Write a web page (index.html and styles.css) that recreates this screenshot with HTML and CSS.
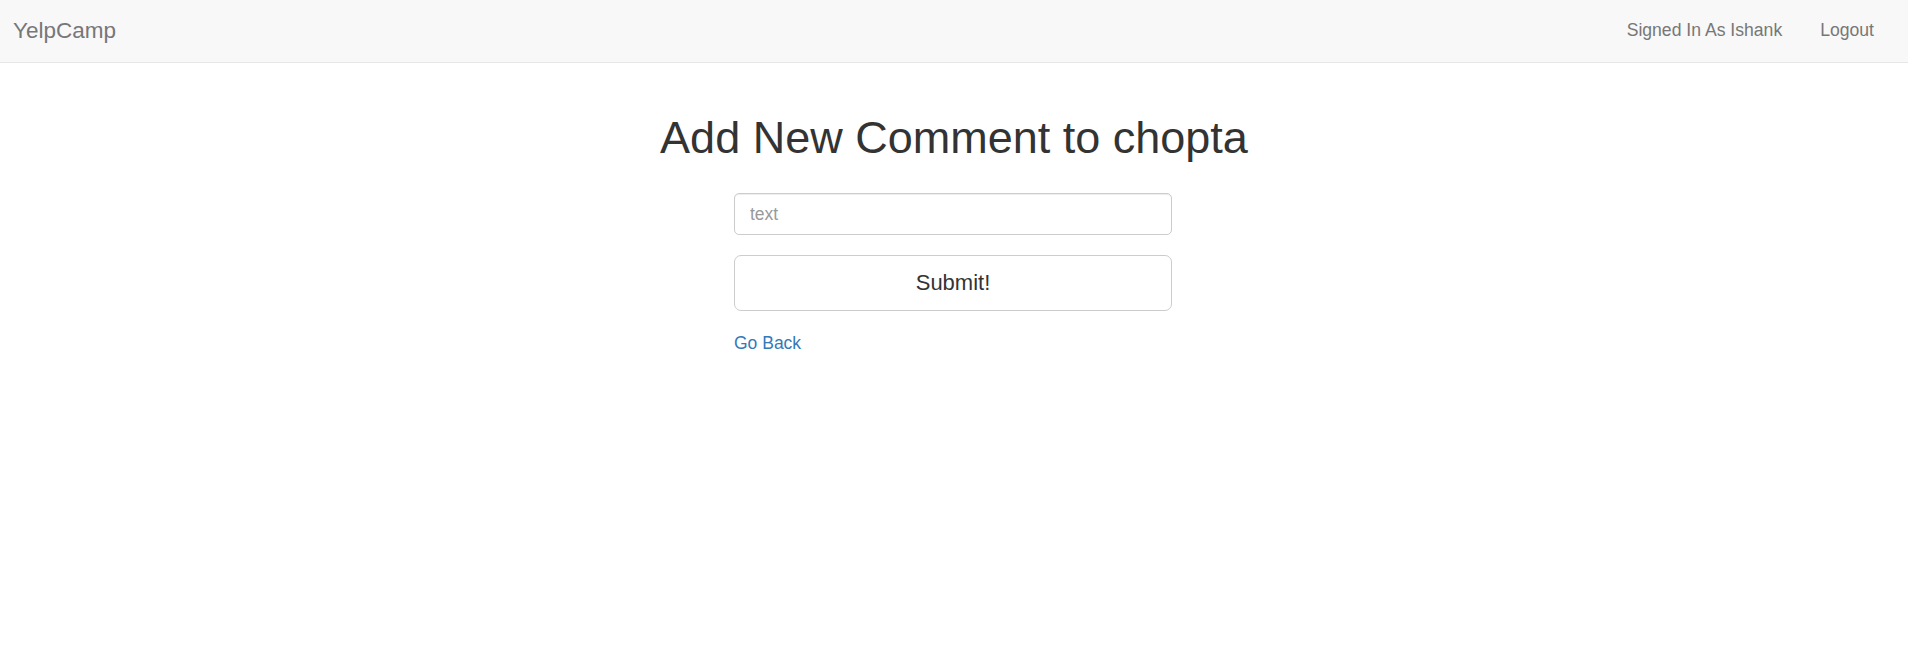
FILE: index.html
```html
<!DOCTYPE html>
<html lang="en">
<head>
<meta charset="utf-8">
<title>YelpCamp</title>
<link rel="stylesheet" href="styles.css">
</head>
<body>
<nav class="navbar">
  <a class="brand" href="#">YelpCamp</a>
  <ul class="nav-right">
    <li><a href="#">Signed In As Ishank</a></li>
    <li><a href="#">Logout</a></li>
  </ul>
</nav>
<main class="page">
  <h1 class="title">Add New Comment to chopta</h1>
  <form class="comment-form">
    <input class="field" type="text" name="text" placeholder="text">
    <button class="submit" type="submit">Submit!</button>
    <a class="back" href="#">Go Back</a>
  </form>
</main>
</body>
</html>
```

FILE: styles.css
```css
* { box-sizing: border-box; }
html, body { margin: 0; padding: 0; }
body {
  font-family: "Liberation Sans", Arial, Helvetica, sans-serif;
  font-size: 17.5px;
  color: #333;
  background: #fff;
}
a { text-decoration: none; }

.navbar {
  display: flex;
  justify-content: space-between;
  align-items: stretch;
  height: 63px;
  background: #f8f8f8;
  border-bottom: 1px solid #e7e7e7;
}
.brand {
  display: block;
  padding-left: 13px;
  font-size: 22.5px;
  line-height: 61px;
  color: #777;
}
.nav-right {
  display: flex;
  list-style: none;
  margin: 0;
  padding: 0 15px 0 0;
}
.nav-right a {
  display: block;
  padding: 0 19px 0 19px;
  font-size: 17.6px;
  line-height: 61px;
  color: #777;
}

.page {
  display: flex;
  flex-direction: column;
  align-items: center;
}
.title {
  margin: 51px 0 0;
  font-size: 45px;
  font-weight: 500;
  line-height: 48px;
  color: #333;
}
.comment-form {
  width: 438px;
  margin-top: 31px;
  margin-right: 2px;
  display: flex;
  flex-direction: column;
  align-items: flex-start;
}
.field {
  width: 100%;
  height: 42px;
  padding: 0 15px;
  border: 1px solid #ccc;
  border-radius: 5px;
  font-family: inherit;
  font-size: 17.5px;
  color: #555;
  box-shadow: inset 0 1px 1px rgba(0,0,0,.075);
}
.field::placeholder { color: #999; }
.submit {
  width: 100%;
  height: 56px;
  margin-top: 20px;
  border: 1px solid #ccc;
  border-radius: 7px;
  background: #fff;
  font-family: inherit;
  font-size: 22px;
  color: #333;
}
.back {
  margin-top: 20px;
  line-height: 24px;
  color: #337ab7;
}
```
